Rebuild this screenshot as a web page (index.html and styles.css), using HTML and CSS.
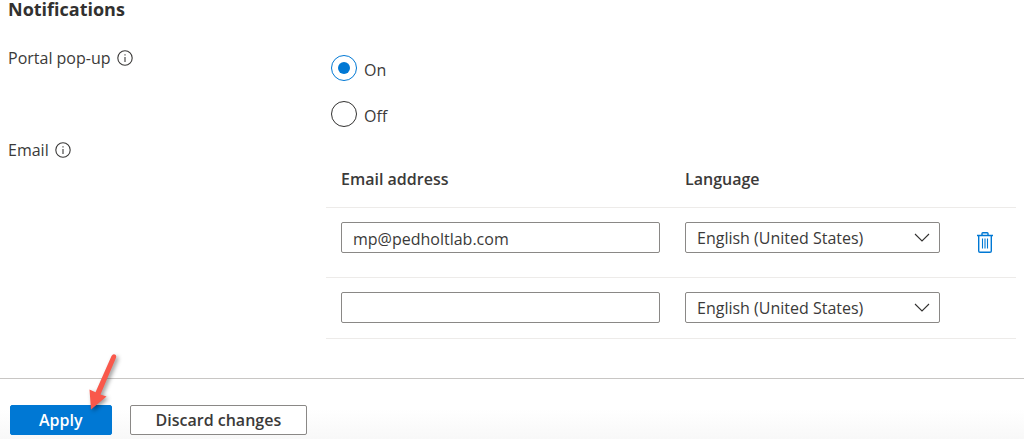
FILE: index.html
```html
<!DOCTYPE html>
<html lang="en">
<head>
<meta charset="utf-8">
<meta name="viewport" content="width=device-width, initial-scale=1">
<title>Notifications</title>
<link rel="stylesheet" href="styles.css">
</head>
<body>
<form class="page">
  <main class="settings">
    <h2 class="title">Notifications</h2>
    <div class="row">
      <div class="row-label">
        <span id="popup-label">Portal pop-up</span>
        <svg class="info" viewBox="0 0 16 16" aria-hidden="true"><circle cx="8" cy="8" r="7.2"/><path d="M8 7v5M8 4.2v1.3"/></svg>
      </div>
      <div class="radios" role="radiogroup" aria-labelledby="popup-label">
        <label class="radio"><input type="radio" name="popup" checked><span>On</span></label>
        <label class="radio"><input type="radio" name="popup"><span>Off</span></label>
      </div>
    </div>
    <div class="row">
      <div class="row-label">
        <span>Email</span>
        <svg class="info" viewBox="0 0 16 16" aria-hidden="true"><circle cx="8" cy="8" r="7.2"/><path d="M8 7v5M8 4.2v1.3"/></svg>
      </div>
      <table class="emails">
        <thead>
          <tr><th id="col-email" class="col-email">Email address</th><th id="col-lang" class="col-lang">Language</th><td class="col-action"></td></tr>
        </thead>
        <tbody>
          <tr>
            <td><input class="field" type="text" value="mp@pedholtlab.com" aria-labelledby="col-email"></td>
            <td>
              <div class="select">
                <select class="field" aria-labelledby="col-lang"><option>English (United States)</option></select>
                <svg class="chevron" viewBox="0 0 16 9" aria-hidden="true"><path d="M1 1l7 7 7-7"/></svg>
              </div>
            </td>
            <td>
              <button class="delete" type="button" aria-label="Delete">
                <svg viewBox="0 0 16 21" aria-hidden="true"><path d="M0 3.5h16M5 3.5v-2q0-.8.8-.8h4.400q.8 0 .8.8v2M1.700 3.500v15.500q0 1.300 1.300 1.300h10q1.300 0 1.300-1.300v-15.500"/><path class="slats" d="M5.500 6.500v10M8 6.500v10M10.500 6.500v10"/></svg>
              </button>
            </td>
          </tr>
          <tr class="last">
            <td><input class="field" type="text" aria-labelledby="col-email"></td>
            <td>
              <div class="select">
                <select class="field" aria-labelledby="col-lang"><option>English (United States)</option></select>
                <svg class="chevron" viewBox="0 0 16 9" aria-hidden="true"><path d="M1 1l7 7 7-7"/></svg>
              </div>
            </td>
            <td></td>
          </tr>
        </tbody>
      </table>
    </div>
  </main>
  <footer class="footer">
    <div class="apply-wrap">
      <button class="button primary" type="button">Apply</button>
      <svg class="arrow" viewBox="0 0 36 62" aria-hidden="true"><path d="M27.500 5Q29 2.500 31 3.600Q32.800 4.700 32 6.700L16.500 43.500L22.500 45.500L7 58.500L5.500 38.500L11.500 41.200Z"/></svg>
    </div>
    <button class="button" type="button">Discard changes</button>
  </footer>
</form>
</body>
</html>
```
FILE: styles.css
```css
* {
  box-sizing: border-box;
}

body {
  margin: 0;
  background: #fff;
  color: #3b3a39;
  font: 16px/20px "Open Sans", "Noto Sans", sans-serif;
}

button,
input,
select {
  font: inherit;
  color: inherit;
}

.page {
  display: flex;
  flex-direction: column;
  min-height: 100vh;
}

.settings {
  flex: 1;
  padding: 0 8px 39px;
}

.title {
  margin: 0 0 30px;
  color: #323130;
  font-size: 18px;
  line-height: 18px;
  font-weight: 700;
}

.row {
  display: grid;
  grid-template-columns: 318px minmax(0, 1fr);
}

.row-label {
  display: flex;
  align-items: center;
  align-self: start;
  gap: 6px;
}

.info {
  width: 16px;
  height: 16px;
  fill: none;
  stroke: #3b3a39;
  stroke-width: 1.1;
}

.radios {
  display: flex;
  flex-direction: column;
  gap: 20px;
  padding: 7px 5px 13px;
}

.radio {
  display: flex;
  align-items: center;
  gap: 7px;
  height: 26px;
}

.radio span {
  padding-top: 4px;
}

.radio input {
  appearance: none;
  display: grid;
  place-items: center;
  width: 26px;
  height: 26px;
  margin: 0;
  border: 1px solid #323130;
  border-radius: 50%;
}

.radio input:checked {
  border-color: #0078d4;
}

.radio input:checked::before {
  content: "";
  width: 12px;
  height: 12px;
  border-radius: 50%;
  background: #0078d4;
}

.emails {
  width: 100%;
  margin-top: 19px;
  border-collapse: collapse;
  table-layout: fixed;
}

.emails th,
.emails td {
  padding: 14px 10px 24px 15px;
  border-bottom: 1px solid #edebe9;
  text-align: left;
  vertical-align: top;
}

.emails th {
  padding: 10px 15px 18px;
  font-weight: 600;
}

.emails .last td {
  padding-bottom: 15px;
}

.emails .col-lang {
  width: 280px;
}

.emails .col-action {
  width: 66px;
}

.field {
  display: block;
  width: 100%;
  height: 31px;
  padding: 2px 11px 0;
  border: 1px solid #8a8886;
  border-radius: 2px;
  background: #fff;
}

.select {
  display: grid;
  align-items: center;
}

.select .field {
  grid-area: 1 / 1;
  appearance: none;
  padding: 0 40px 0 11px;
}

.chevron {
  grid-area: 1 / 1;
  justify-self: end;
  width: 16px;
  height: 9px;
  margin-right: 10px;
  fill: none;
  stroke: #323130;
  stroke-width: 1.1;
  pointer-events: none;
}

.delete {
  display: block;
  width: 16px;
  height: 21px;
  margin: 10px 0 0 12px;
  padding: 0;
  border: 0;
  background: none;
}

.delete svg {
  display: block;
  width: 16px;
  height: 21px;
  fill: none;
  stroke: #0078d4;
  stroke-width: 1.4;
}

.delete .slats {
  stroke-width: 1.1;
}

.footer {
  display: flex;
  gap: 18px;
  padding: 26px 10px 4px;
  border-top: 1px solid #c8c6c4;
  background: linear-gradient(#fff 50%, #f8f8f8);
}

.apply-wrap {
  position: relative;
}

.button {
  display: block;
  height: 30px;
  padding: 0 25px;
  border: 1px solid #8a8886;
  border-radius: 2px;
  background: #fff;
  font-weight: 600;
}

.primary {
  padding: 0 28px;
  border-color: #0078d4;
  background: #0078d4;
  color: #fff;
}

.arrow {
  position: absolute;
  right: -8px;
  bottom: 22px;
  width: 36px;
  height: 62px;
  fill: #f9584b;
  filter: drop-shadow(2px 2px 2px rgba(0, 0, 0, 0.4));
  pointer-events: none;
}
```
